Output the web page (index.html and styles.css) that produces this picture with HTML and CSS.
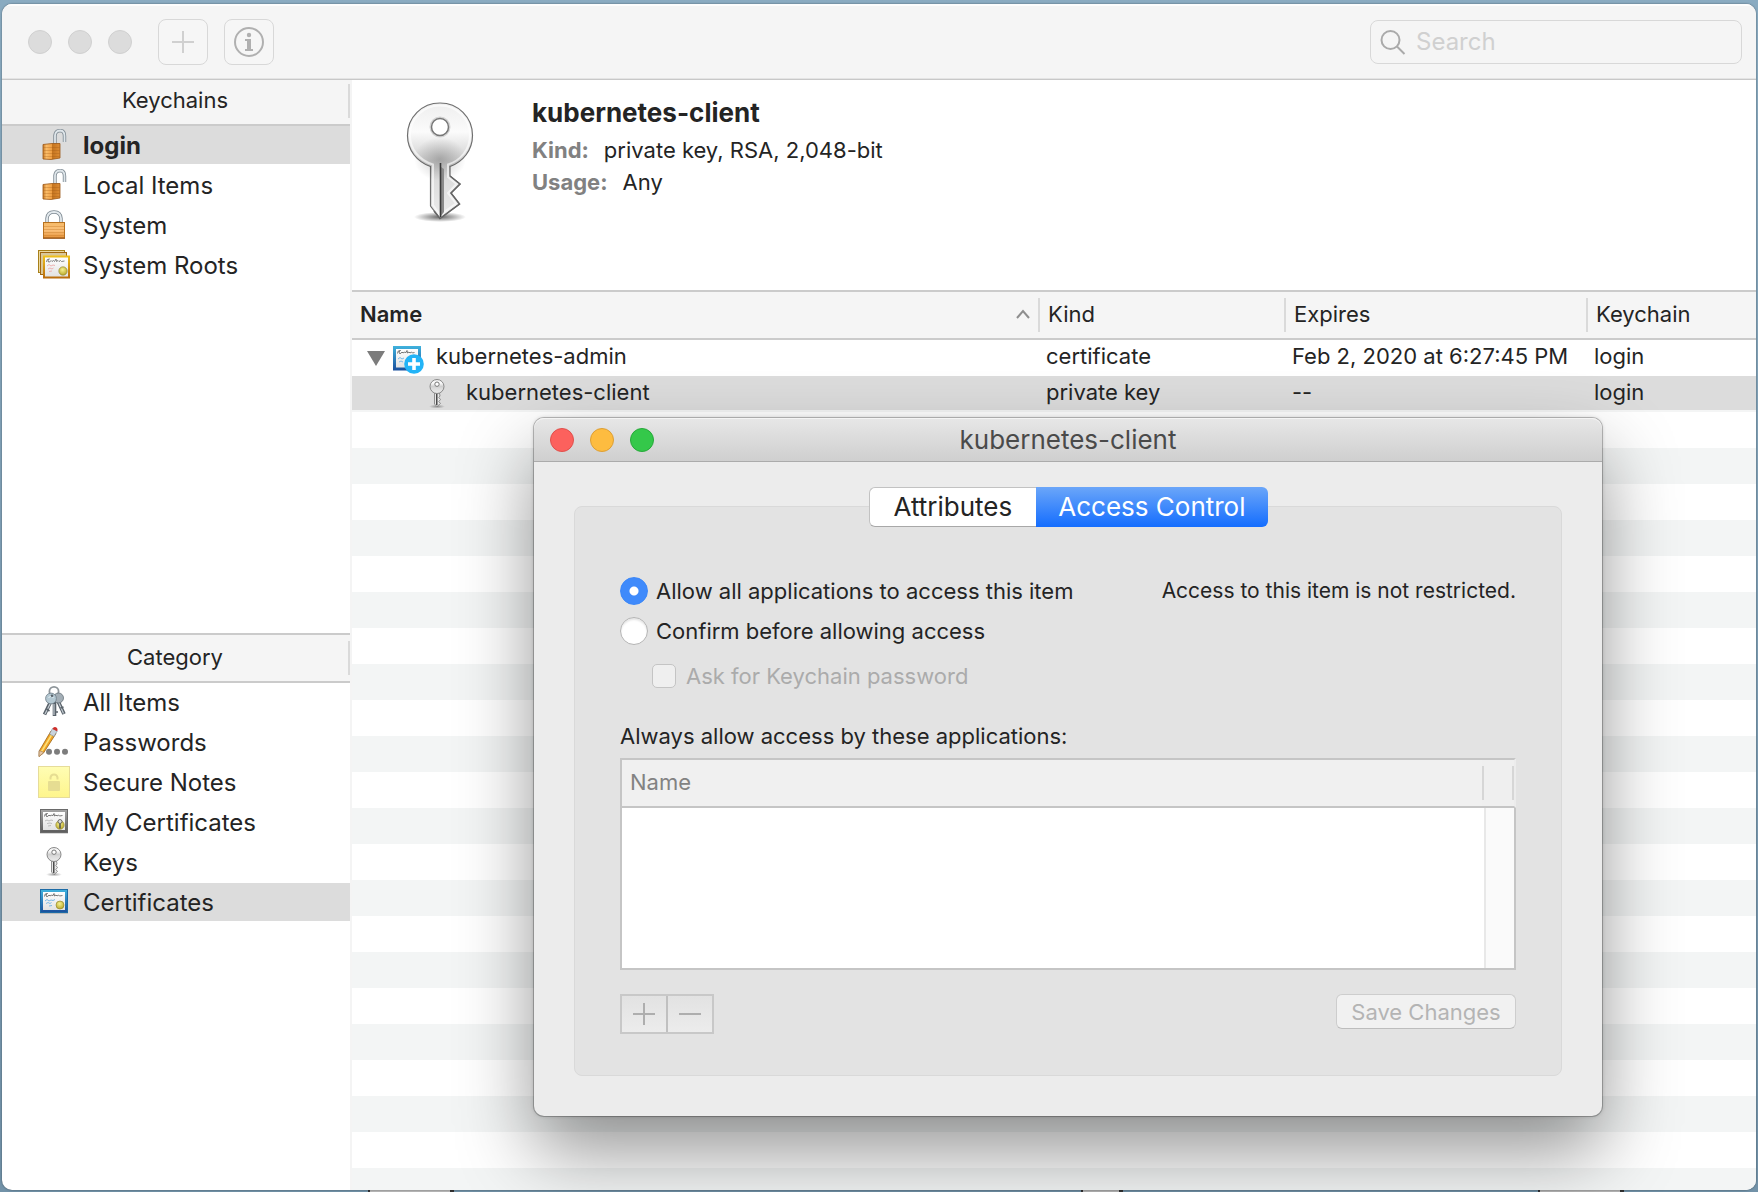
FILE: index.html
```html
<!DOCTYPE html>
<html lang="en">
<head>
<meta charset="utf-8">
<title>Keychain Access</title>
<link rel="stylesheet" href="styles.css">
</head>
<body>
<svg class="sprite" aria-hidden="true">
  <defs>
    <linearGradient id="brass" x1="0" y1="0" x2="1" y2="0">
      <stop offset="0" stop-color="#c87a28"/><stop offset=".2" stop-color="#fabc68"/><stop offset=".5" stop-color="#f0a044"/><stop offset=".56" stop-color="#c4741f"/><stop offset="1" stop-color="#dd8c34"/>
    </linearGradient>
    <linearGradient id="brassFront" x1="0" y1="0" x2="0" y2="1">
      <stop offset="0" stop-color="#f6ba68"/><stop offset=".5" stop-color="#fac07a"/><stop offset="1" stop-color="#e6933a"/>
    </linearGradient>
    <linearGradient id="blueFrame" x1="0" y1="0" x2="0" y2="1">
      <stop offset="0" stop-color="#3fb2dd"/><stop offset="1" stop-color="#1a4f9c"/>
    </linearGradient>
    <linearGradient id="greyFrame" x1="0" y1="0" x2="0" y2="1">
      <stop offset="0" stop-color="#a5a5a5"/><stop offset="1" stop-color="#5c5c5c"/>
    </linearGradient>
    <linearGradient id="goldFrame" x1="0" y1="0" x2="0" y2="1">
      <stop offset="0" stop-color="#f0c21c"/><stop offset="1" stop-color="#b86a0c"/>
    </linearGradient>
    <linearGradient id="paper" x1="0" y1="0" x2="0" y2="1">
      <stop offset="0" stop-color="#ffffff"/><stop offset="1" stop-color="#e2e2e2"/>
    </linearGradient>
    <radialGradient id="seal" cx=".45" cy=".35" r=".65">
      <stop offset="0" stop-color="#f6f08e"/><stop offset="1" stop-color="#b9a92c"/>
    </radialGradient>
    <linearGradient id="note" x1="0" y1="0" x2="0" y2="1">
      <stop offset="0" stop-color="#fffdb4"/><stop offset="1" stop-color="#fef58c"/>
    </linearGradient>
    <linearGradient id="keyHead" x1="0" y1="0" x2="0" y2="1">
      <stop offset="0" stop-color="#eeeeee"/><stop offset=".25" stop-color="#fbfbfb"/><stop offset=".5" stop-color="#cfcfcf"/><stop offset=".62" stop-color="#dadada"/><stop offset="1" stop-color="#ededed"/>
    </linearGradient>
    <radialGradient id="keyShade" cx=".5" cy=".5" r=".5">
      <stop offset="0" stop-color="#000" stop-opacity=".3"/><stop offset="1" stop-color="#000" stop-opacity="0"/>
    </radialGradient>
    <radialGradient id="ground" cx=".5" cy=".5" r=".5">
      <stop offset="0" stop-color="#000" stop-opacity=".6"/><stop offset="1" stop-color="#000" stop-opacity="0"/>
    </radialGradient>
  </defs>

  <symbol id="lock-open" viewBox="0 0 32 32">
    <path d="M17 14.500V6.500Q17.500 1.500 22.500 1.500Q26.500 2 26.500 7V13" fill="none" stroke="#7b8790" stroke-width="3.400"/>
    <path d="M17 14.500V6.500Q17.500 1.500 22.500 1.500Q26.500 2 26.500 7V13" fill="none" stroke="#dfe6ea" stroke-width="1.800"/>
    <path d="M5 15.500L14 14.500L22 14.500V29L13 30.500L5 30Z" fill="url(#brass)" stroke="#9a5514" stroke-width=".8"/>
    <path d="M5.500 18.500h16M5.500 21.500h16M5.500 24.500h16M5.500 27.500h16" stroke="#9a5514" stroke-width=".8" opacity=".35"/>
  </symbol>
  <symbol id="lock-closed" viewBox="0 0 32 32">
    <path d="M9 14V9.500Q9.500 3 16 3Q22.500 3 23 9.500V14" fill="none" stroke="#7b8790" stroke-width="3.400"/>
    <path d="M9 14V9.500Q9.500 3 16 3Q22.500 3 23 9.500V14" fill="none" stroke="#e4eaee" stroke-width="1.800"/>
    <rect x="5.500" y="13.500" width="21" height="15.500" fill="url(#brassFront)" stroke="#b8711f"/>
    <path d="M6 17.500h20M6 20.500h20M6 23.500h20M6 26.500h20" stroke="#c0741f" stroke-width=".8" opacity=".45"/>
    <path d="M5 29.200h22" stroke="#8f4a10"/>
  </symbol>
  <symbol id="roots" viewBox="0 0 32 32">
    <rect x=".5" y="1.500" width="26" height="22" fill="#ecd9a0" stroke="#a8801a"/>
    <rect x="2.500" y="3.500" width="26" height="22" fill="#d9c79a" stroke="#a0660f"/>
    <rect x="5" y="6.500" width="27" height="23" fill="url(#goldFrame)"/>
    <rect x="7" y="8.500" width="23" height="19" fill="url(#paper)"/>
    <path d="M8.500 13q0-3.500 3-3q-2.500 1-1 3q1.500 .5 2.500-1.500l1 1l1.500-1l1 1l1.500-2.500l.5 2.500l1.500-1l1 1l1.500-1l1 1l3-.5" fill="none" stroke="#666" stroke-width=".8"/>
    <path d="M9 17l2-1.500l2 1.500l2-1l2 .500M10 20l2-1l2 1l1.500-1M11 22.500l3-.5" fill="none" stroke="#ecaaaa" stroke-width=".9"/>
    <circle cx="25" cy="22" r="4.200" fill="url(#seal)" stroke="#8f8226" stroke-width=".6"/>
  </symbol>
  <symbol id="cert" viewBox="0 0 32 32">
    <rect x="2" y="26" width="28" height="2" fill="#000" opacity=".15"/>
    <rect x="2.500" y="3.500" width="27" height="23" fill="url(#blueFrame)" stroke="#1d6ba6"/>
    <rect x="5" y="6" width="22" height="18" fill="url(#paper)"/>
    <path d="M6.500 10.500q0-3.500 3-3q-2.500 1-1 3q1.500 .5 2.500-1.500l1 1l1.500-1l1 1l1.500-2.500l.5 2.500l1.500-1l1 1l1.500-1l1 1l3-.5" fill="none" stroke="#555" stroke-width=".8"/>
    <path d="M7 15l2-1.500l2 1.500l2-1l2 .500l2-1M8 17.500l2-1l2 1l1.500-1M11 20l3-.5" fill="none" stroke="#6fb3e4" stroke-width=".9"/>
    <circle cx="22" cy="19" r="4" fill="url(#seal)" stroke="#8f8226" stroke-width=".6"/>
  </symbol>
  <symbol id="my-cert" viewBox="0 0 32 32">
    <rect x="2" y="26" width="28" height="2" fill="#000" opacity=".15"/>
    <rect x="2.500" y="3.500" width="27" height="23" fill="url(#greyFrame)" stroke="#6a6a6a"/>
    <rect x="5" y="6" width="22" height="18" fill="url(#paper)"/>
    <path d="M6.500 10.500q0-3.500 3-3q-2.500 1-1 3q1.500 .5 2.500-1.500l1 1l1.500-1l1 1l1.500-2.500l.5 2.500l1.500-1l1 1l1.500-1l1 1l3-.5" fill="none" stroke="#555" stroke-width=".8"/>
    <path d="M7 15l2-1l2 1l2-1l2 .500M9 17.500l3-.5l2 .5M10 20l3-.5" fill="none" stroke="#b5b5b5" stroke-width=".9"/>
    <circle cx="22" cy="19" r="4.200" fill="url(#seal)" stroke="#8f8226" stroke-width=".6"/>
    <circle cx="22" cy="15.500" r="2" fill="#ddd" stroke="#555" stroke-width=".8"/>
    <path d="M22 17.500v5" stroke="#555" stroke-width="1.600"/>
  </symbol>
  <symbol id="cert-new" viewBox="0 0 32 32">
    <rect x="1" y="4" width="28" height="24.500" fill="url(#blueFrame)"/>
    <rect x="4" y="7" width="22" height="18.500" fill="url(#paper)"/>
    <path d="M5.500 11.500q0-3.500 3-3q-2.500 1-1 3q1.500 .5 2.500-1.500l1 1l1.500-1l1 1l1.500-2.500l.5 2.500l1.500-1l1 1l1.500-1l1 1l2-.5" fill="none" stroke="#555" stroke-width=".8"/>
    <path d="M6 17l2-1.500l2 1.500l2-1M7 20l2-1l2 1" fill="none" stroke="#6fb3e4" stroke-width=".9"/>
    <circle cx="22" cy="22" r="9.800" fill="#23b4f7"/>
    <path d="M22 16v12M16 22h12" stroke="#fff" stroke-width="3.600"/>
  </symbol>
  <symbol id="key-small" viewBox="0 0 32 32">
    <ellipse cx="16" cy="28.500" rx="8" ry="2" fill="url(#ground)" opacity=".6"/>
    <path d="M13.500 15V26L16 28.500L19.500 25.500L17.800 23.500L19.500 21.500L17.800 19.500L19 18L18.500 15Z" fill="#e8e8e8" stroke="#777" stroke-width=".8"/>
    <path d="M15.800 15v12" stroke="#222" stroke-width="1.200"/>
    <circle cx="16" cy="8.500" r="7" fill="url(#keyHead)" stroke="#8a8a8a"/>
    <circle cx="16" cy="6.200" r="2.200" fill="#fff" stroke="#777"/>
  </symbol>
  <symbol id="key-ring" viewBox="0 0 32 32">
    <circle cx="16" cy="5.500" r="4.600" fill="none" stroke="#8e959a" stroke-width="1.800"/>
    <path d="M13 15L6.500 28.500M20 15L26 28M16.500 16V30" stroke="#59626a" stroke-width="3.600"/>
    <path d="M12.500 17L7 28M20.500 16L25.500 27.500M16 18V29" stroke="#c4ccd2" stroke-width="1.200"/>
    <path d="M8.500 23l3 2M18 26h2M22.500 22l3-1" stroke="#59626a" stroke-width="1.600"/>
    <circle cx="20.500" cy="12" r="5" fill="#a3aeb6" stroke="#68737b" stroke-width=".8"/>
    <circle cx="13" cy="12.500" r="5.400" fill="#b4c8d2" stroke="#6c7a84" stroke-width=".8"/>
    <path d="M10.500 11.500q2.500-2.500 5 0" stroke="#eaf3f7" fill="none"/>
    <circle cx="14" cy="9.800" r="1.300" fill="#59626a"/>
  </symbol>
  <symbol id="pencil" viewBox="0 0 32 32">
    <path d="M13 5L18 7.500L5.500 27L1 30.500L1.200 25Z" fill="#f2a526" stroke="#9a6417" stroke-width=".8"/>
    <path d="M14.800 7L3 26.500" stroke="#fbe07a" stroke-width="1.500"/>
    <path d="M1.200 24.500L5.800 26.500L1 30.500Z" fill="#e8c7a4" stroke="#9b7a5a" stroke-width=".6"/>
    <path d="M11.500 8L14.500 2.500L19.200 5L16 10.500Z" fill="#c9d3dc" stroke="#7c8791" stroke-width=".6"/>
    <path d="M14.500 3Q15.500 .2 18 1.200Q20.300 2.500 19.200 5.200Z" fill="#cf2f2b"/>
    <circle cx="11" cy="25.700" r="3" fill="#7d7d7d"/><circle cx="19" cy="25.700" r="3" fill="#7d7d7d"/><circle cx="27" cy="25.700" r="3" fill="#7d7d7d"/>
  </symbol>
  <symbol id="secure-note" viewBox="0 0 32 32">
    <rect x=".5" y=".5" width="31" height="31" fill="url(#note)" stroke="#e6dc9a"/>
    <rect x="10" y="15" width="12" height="10" rx="1" fill="#e6dd92"/>
    <path d="M12.500 13.500V11.500Q13 8.500 16 8.500Q19 8.500 19.500 11.500V13.500" fill="none" stroke="#e6dd92" stroke-width="2"/>
  </symbol>
</svg>

<main class="window">
  <header class="toolbar">
    <div class="lights">
      <button class="light" aria-label="Close"></button>
      <button class="light" aria-label="Minimize"></button>
      <button class="light" aria-label="Zoom"></button>
    </div>
    <button class="tool" aria-label="Add item" disabled>
      <svg width="22" height="22" viewBox="0 0 22 22"><path d="M11 0v22M0 11h22" stroke="#d0d0d0" stroke-width="2"/></svg>
    </button>
    <button class="tool" aria-label="Information" disabled>
      <svg width="30" height="30" viewBox="0 0 30 30"><circle cx="15" cy="15" r="14" fill="none" stroke="#b0b0b0" stroke-width="2"/><circle cx="15" cy="8" r="2.200" fill="#b0b0b0"/><path d="M11 12h6v10h2v2h-8v-2h2v-8h-2z" fill="#b0b0b0"/></svg>
    </button>
    <label class="search">
      <svg width="26" height="26" viewBox="0 0 26 26" aria-hidden="true"><circle cx="10.500" cy="11" r="9" fill="none" stroke="#aaa" stroke-width="2"/><path d="M17 17.500l7.500 7.500" stroke="#aaa" stroke-width="2"/></svg>
      <input type="search" placeholder="Search" aria-label="Search">
    </label>
  </header>

  <div class="columns">
    <nav class="sidebar">
      <section class="group group-keychains">
        <h2 class="group-title">Keychains</h2>
        <ul class="list">
          <li><a class="item item-current item-bold" href="#login"><svg class="icon"><use href="#lock-open"/></svg>login</a></li>
          <li><a class="item" href="#local"><svg class="icon"><use href="#lock-open"/></svg>Local Items</a></li>
          <li><a class="item" href="#system"><svg class="icon"><use href="#lock-closed"/></svg>System</a></li>
          <li><a class="item" href="#roots-list"><svg class="icon"><use href="#roots"/></svg>System Roots</a></li>
        </ul>
      </section>
      <section class="group">
        <h2 class="group-title group-title-ruled">Category</h2>
        <ul class="list">
          <li><a class="item" href="#all"><svg class="icon"><use href="#key-ring"/></svg>All Items</a></li>
          <li><a class="item" href="#passwords"><svg class="icon"><use href="#pencil"/></svg>Passwords</a></li>
          <li><a class="item" href="#notes"><svg class="icon"><use href="#secure-note"/></svg>Secure Notes</a></li>
          <li><a class="item" href="#mine"><svg class="icon"><use href="#my-cert"/></svg>My Certificates</a></li>
          <li><a class="item" href="#keys"><svg class="icon"><use href="#key-small"/></svg>Keys</a></li>
          <li><a class="item item-current" href="#certificates"><svg class="icon"><use href="#cert"/></svg>Certificates</a></li>
        </ul>
      </section>
    </nav>

    <div class="content">
      <section class="summary">
        <svg class="summary-key" width="80" height="128" viewBox="0 0 80 128" aria-hidden="true">
          <ellipse cx="40" cy="116" rx="26" ry="5" fill="url(#ground)"/>
          <path d="M40 2C58 2 72.500 16 72.500 34.500C72.500 49 63 61 50 65.500V75L60 83L51 92L59.500 103L40 117.500L30.500 105V65.500C17 61 7.500 49 7.500 34.500C7.500 16 22 2 40 2Z" fill="url(#keyHead)" stroke="#6f6f6f" stroke-width="1.200"/>
          <ellipse cx="40" cy="58" rx="26" ry="22" fill="url(#keyShade)" opacity=".7"/>
          <path d="M40 4.500C56.500 4.500 70 17.500 70 34.500C70 48.500 60.500 59.500 48 63.500V76L56.500 83L48 92L56 102.500L40 114L33 104V63.500C19.500 59.500 10 48.500 10 34.500C10 17.500 23.500 4.500 40 4.500Z" fill="none" stroke="#fff" stroke-width="2" opacity=".6"/>
          <path d="M41 66V115L44 111V68Z" fill="#8a8a8a"/>
          <path d="M40.500 62V116" stroke="#3a3a3a" stroke-width="1.600"/>
          <path d="M50 75L60 83L51 92L59.500 103L40 117.500L34 110" fill="none" stroke="#666" stroke-width="1.500"/>
          <circle cx="40" cy="26" r="9" fill="#fff" stroke="#d4d4d4" stroke-width="3"/>
          <circle cx="40" cy="26" r="8.500" fill="#fff" stroke="#777" stroke-width="1.500"/>
        </svg>
        <div>
          <h1 class="summary-title">kubernetes-client</h1>
          <dl class="facts">
            <div class="fact"><dt>Kind:</dt><dd>private key, RSA, 2,048-bit</dd></div>
            <div class="fact"><dt>Usage:</dt><dd>Any</dd></div>
          </dl>
        </div>
      </section>
      <div class="listing">
        <table class="items">
          <colgroup><col><col class="col-kind"><col class="col-expires"><col class="col-keychain"></colgroup>
          <thead>
            <tr>
              <th class="sorted" scope="col"><span class="sort">Name<svg width="14" height="10" viewBox="0 0 14 10" aria-hidden="true"><path d="M1 9l6-7l6 7" fill="none" stroke="#8e8e8e" stroke-width="2"/></svg></span></th>
              <th scope="col">Kind</th><th scope="col">Expires</th><th scope="col">Keychain</th>
            </tr>
          </thead>
          <tbody>
            <tr>
              <td><span class="name name-parent"><svg class="twisty" width="18" height="15" viewBox="0 0 18 15" aria-hidden="true"><path d="M0 0h18L9 15z" fill="#7c7c7c"/></svg><svg class="icon"><use href="#cert-new"/></svg>kubernetes-admin</span></td>
              <td>certificate</td><td>Feb 2, 2020 at 6:27:45 PM</td><td>login</td>
            </tr>
            <tr class="chosen">
              <td><span class="name name-child"><svg class="icon"><use href="#key-small"/></svg>kubernetes-client</span></td>
              <td>private key</td><td>--</td><td>login</td>
            </tr>
          </tbody>
        </table>
      </div>
    </div>
  </div>
</main>

<section class="dialog" role="dialog" aria-labelledby="dialog-title">
  <header class="titlebar">
    <div class="lights">
      <button class="light light-red" aria-label="Close"></button>
      <button class="light light-amber" aria-label="Minimize"></button>
      <button class="light light-green" aria-label="Zoom"></button>
    </div>
    <h2 class="titlebar-text" id="dialog-title">kubernetes-client</h2>
  </header>
  <div class="dialog-body">
    <div class="tabs">
      <button class="tab">Attributes</button><button class="tab tab-on">Access Control</button>
    </div>
    <form class="panel">
      <div class="row">
        <label class="choice"><input type="radio" name="access" checked>Allow all applications to access this item</label>
        <p class="status">Access to this item is not restricted.</p>
      </div>
      <div class="row">
        <label class="choice"><input type="radio" name="access">Confirm before allowing access</label>
      </div>
      <label class="choice choice-nested"><input type="checkbox" disabled>Ask for Keychain password</label>
      <p class="caption">Always allow access by these applications:</p>
      <table class="apps">
        <thead><tr><th scope="col">Name</th><th class="apps-gutter" aria-label="Scroll"></th></tr></thead>
        <tbody><tr><td></td><td class="apps-gutter"></td></tr></tbody>
      </table>
      <div class="actions">
        <div class="stepper">
          <button type="button" aria-label="Add application" disabled><svg width="22" height="22" viewBox="0 0 22 22"><path d="M11 0v22M0 11h22" stroke="#aeaeae" stroke-width="2"/></svg></button>
          <button type="button" aria-label="Remove application" disabled><svg width="22" height="22" viewBox="0 0 22 22"><path d="M0 11h22" stroke="#aeaeae" stroke-width="2"/></svg></button>
        </div>
        <button type="button" class="save" disabled>Save Changes</button>
      </div>
    </form>
  </div>
</section>
</body>
</html>
```

FILE: styles.css
```css
* { box-sizing: border-box; }

body {
  margin: 0;
  min-height: 100vh;
  padding: 4px 2px 2px;
  display: flex;
  position: relative;
  overflow: hidden;
  /* edges of other desktop items peek out under the window */
  background:
    linear-gradient(90deg, #333 2px, #b9b9b9 2px 82px, #333 82px) 22% 100% / 86px 2px no-repeat,
    linear-gradient(90deg, #333 2px, #b9b9b9 2px 38px, #333 38px) 63% 100% / 42px 2px no-repeat,
    linear-gradient(90deg, #333 2px, #b9b9b9 2px 82px, #333 82px) 92% 100% / 86px 2px no-repeat,
    linear-gradient(#8aabc1, #7292a8);
  font-family: Inter, "Liberation Sans", sans-serif;
  font-size: 22px;
  line-height: 32px;
  color: #242424;
}

h1, h2, p, ul, dl, dd { margin: 0; padding: 0; }
ul { list-style: none; }
button, input { font: inherit; color: inherit; }
button { padding: 0; }
.sprite { position: absolute; width: 0; height: 0; }
.icon { width: 32px; height: 32px; flex: none; }

.window {
  flex: 1;
  display: flex;
  flex-direction: column;
  background: #fff;
  border-radius: 10px;
  overflow: hidden;
  box-shadow: 0 0 2px rgba(0, 0, 0, .5);
}

.toolbar {
  display: flex;
  align-items: center;
  height: 76px;
  padding: 0 14px 0 26px;
  background: #f5f5f5;
  box-shadow: inset 0 2px #fdfdfd, inset 0 -1px #c8c8c8, inset 0 -2px #e4e4e4;
}

.lights { display: flex; gap: 16px; }
.light { width: 24px; height: 24px; border: 1px solid #d0d0d0; border-radius: 50%; background: #dcdcdc; }
.light-red { background: #fc615d; border-color: #e0504c; }
.light-amber { background: #fdbc40; border-color: #dd9f34; }
.light-green { background: #34c84a; border-color: #27a93a; }

.tool {
  display: grid;
  place-items: center;
  width: 50px;
  height: 46px;
  margin-left: 16px;
  border: 1px solid #d8d8d8;
  border-radius: 8px;
  background: #f6f6f6;
}
.lights + .tool { margin-left: 26px; }

.search {
  display: flex;
  align-items: center;
  gap: 10px;
  width: 372px;
  height: 44px;
  margin-left: auto;
  padding: 0 9px;
  border: 1px solid #d8d8d8;
  border-radius: 8px;
}
.search input { flex: 1; min-width: 0; border: 0; padding: 0; background: none; outline: 0; font-size: 24px; }
.search input::placeholder { color: #d0d0d0; opacity: 1; }

.columns { flex: 1; display: flex; }
.sidebar { width: 350px; border-right: 2px solid #f4f4f4; display: flex; flex-direction: column; }
.group-keychains { height: 553px; }
.group-title {
  height: 46px;
  padding-right: 2px;
  border-bottom: 2px solid #cbcbcb;
  background: linear-gradient(#dadada, #dadada) right 4px / 2px 34px no-repeat #f5f5f5;
  font-size: 22px;
  font-weight: 400;
  line-height: 40px;
  text-align: center;
}
.group-title-ruled {
  height: 50px;
  border-top: 2px solid #cbcbcb;
  background-position: right 6px;
  line-height: 44px;
}
.list { display: grid; gap: 2px; }
.item {
  display: flex;
  align-items: center;
  gap: 13px;
  height: 38px;
  padding: 2px 0 0 36px;
  color: inherit;
  font-size: 24px;
  text-decoration: none;
}
.item .icon { margin-top: -2px; }
.item-current { background: #dcdcdc; }
.item-bold { font-weight: 700; }

.content { flex: 1; display: flex; flex-direction: column; min-width: 0; }
.summary { display: flex; gap: 52px; height: 210px; padding: 15px 0 0 48px; }
.summary-key { margin-top: 6px; }
.summary-title { font-size: 26px; line-height: 36px; font-weight: 700; }
.facts { margin-top: 3px; }
.fact { display: flex; gap: 15px; }
.fact dt { font-weight: 700; color: #818181; }

.listing {
  flex: 1;
  background: repeating-linear-gradient(#fff 0 36px, #f3f5f5 36px 72px) 0 50px;
}
.items { width: 100%; table-layout: fixed; border-spacing: 0; }
.col-kind { width: 246px; }
.col-expires { width: 302px; }
.col-keychain { width: 168px; }
.items th {
  height: 50px;
  padding: 0 8px 2px;
  border-top: 2px solid #cbcbcb;
  border-bottom: 2px solid #cbcbcb;
  background: linear-gradient(#dadada, #dadada) right 6px / 2px 34px no-repeat #f5f5f5;
  font-weight: 400;
  text-align: left;
}
.items th:last-child { background: #f5f5f5; }
.items .sorted { padding-right: 10px; font-weight: 600; }
.sort { display: flex; align-items: center; justify-content: space-between; }
.items td { height: 36px; padding: 0 6px; vertical-align: top; white-space: nowrap; }
.chosen td { background: linear-gradient(#dcdcdc 34px, #f4f5f5 34px); }
.name { display: flex; align-items: center; height: 32px; }
.name .icon, .twisty { position: relative; top: 2px; }
.name-parent { gap: 7px; padding-left: 9px; }
.name-parent .icon { margin-right: 5px; }
.name-child { gap: 13px; padding-left: 63px; }

.dialog {
  position: absolute;
  left: 534px;
  top: 418px;
  width: 1068px;
  border-radius: 10px;
  background: #ececec;
  box-shadow: 0 0 0 1px rgba(0, 0, 0, .22), 0 0 4px rgba(0, 0, 0, .2), 0 36px 76px rgba(0, 0, 0, .42);
}
.titlebar {
  display: grid;
  grid-template-columns: 1fr auto 1fr;
  align-items: center;
  height: 44px;
  padding: 0 16px;
  border-bottom: 1px solid #ababab;
  border-radius: 10px 10px 0 0;
  background: linear-gradient(#e7e7e7, #cfcfcf);
  box-shadow: inset 0 1px #f4f4f4;
}
.titlebar-text { font-size: 26px; font-weight: 400; color: #4a4a4a; }
.dialog-body { padding: 25px 40px 40px; }

.tabs { display: flex; justify-content: center; position: relative; z-index: 1; }
.tab {
  height: 40px;
  padding: 0 24px;
  border: 1px solid #c2c2c2;
  border-right: 0;
  border-bottom-color: #a8a8a8;
  border-radius: 6px 0 0 6px;
  background: #fff;
  font-size: 26px;
}
.tab-on {
  padding: 0 22px;
  border: 0;
  border-radius: 0 6px 6px 0;
  background: linear-gradient(#6ba6f9, #146dfe);
  color: #fff;
}

.panel {
  margin-top: -21px;
  padding: 64px 45px 41px;
  border: 1px solid #d9d9d9;
  border-radius: 8px;
  background: #e3e3e3;
}
.row { display: flex; align-items: center; justify-content: space-between; height: 40px; }
.choice { display: flex; align-items: center; gap: 8px; }
.choice input { appearance: none; flex: none; margin: 0; border: 1px solid #b4b4b4; background: #fff; }
.choice input[type="radio"] { width: 28px; height: 28px; border-radius: 50%; box-shadow: inset 0 2px 2px rgba(0, 0, 0, .1); }
.choice input[type="radio"]:checked { border-color: #3b87f8; background: radial-gradient(circle, #fff 4px, #3f8afb 5px); box-shadow: none; }
.choice input[type="checkbox"] { width: 24px; height: 24px; border-color: #c4c4c4; border-radius: 5px; background: #efefef; }
.choice-nested { gap: 10px; height: 50px; padding-left: 32px; color: #ababab; }
.status { font-size: 21px; }
.caption { margin-top: 19px; }

.apps { width: 100%; margin-top: 6px; table-layout: fixed; border-spacing: 0; }
.apps th {
  height: 50px;
  padding: 0 8px 2px;
  border: 2px solid #c5c5c5;
  border-right: 0;
  background: #f0f0f0;
  font-weight: 400;
  text-align: left;
  color: #828282;
}
.apps td { height: 162px; border: 2px solid #c5c5c5; border-width: 0 0 2px 2px; background: #fff; }
.apps .apps-gutter { width: 34px; padding: 0; border-left: 0; }
.apps th.apps-gutter {
  border-right: 2px solid #ececec;
  background:
    linear-gradient(#d6d6d6, #d6d6d6) left 6px / 2px 34px no-repeat,
    linear-gradient(#d6d6d6, #d6d6d6) right 6px / 2px 34px no-repeat,
    #efefef;
}
.apps td.apps-gutter { border-right: 2px solid #c5c5c5; background: linear-gradient(90deg, #fff 2px, #e8e8e8 2px 4px, #fafafa 4px); }

.actions { display: flex; justify-content: space-between; align-items: flex-start; margin-top: 24px; }
.stepper { display: flex; border: 2px solid #c8c8c8; }
.stepper button {
  display: grid;
  place-items: center;
  width: 44px;
  height: 36px;
  border: 0;
  background: linear-gradient(#e2e2e2, #ececec);
}
.stepper button + button { width: 46px; border-left: 2px solid #c0c0c0; }
.save {
  width: 180px;
  height: 35px;
  border: 1px solid #cdcdcd;
  border-bottom-color: #bdbdbd;
  border-radius: 6px;
  background: #f1f1f1;
  color: #b4b4b4;
}
```
